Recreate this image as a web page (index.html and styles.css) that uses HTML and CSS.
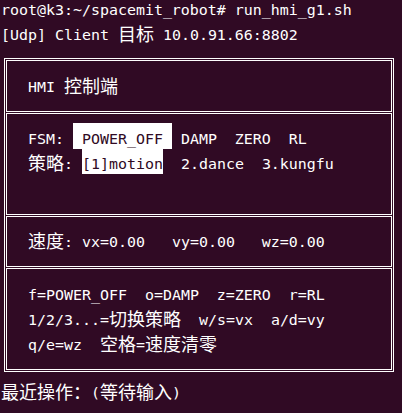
FILE: index.html
```html
<!DOCTYPE html>
<html lang="zh">
<head>
<meta charset="utf-8">
<title>run_hmi_g1.sh</title>
<link rel="stylesheet" href="styles.css">
</head>
<body>
<div class="term">
  <div class="line l1">root@k3:~/spacemit_robot# run_hmi_g1.sh</div>
  <div class="line l2">[Udp] Client <span class="c">目标</span> 10.0.91.66:8802</div>
  <div class="box">
    <section class="sec s1">
      <div class="row">HMI <span class="c">控制端</span></div>
    </section>
    <section class="sec s2">
      <div class="row">FSM: <span class="hl"> POWER_OFF </span> DAMP  ZERO  RL </div>
      <div class="row"><span class="c">策略</span>: <span class="hl">[1]motion</span>  2.dance  3.kungfu</div>
    </section>
    <section class="sec s3">
      <div class="row"><span class="c">速度</span>: vx=0.00   vy=0.00   wz=0.00</div>
    </section>
    <section class="sec s4">
      <div class="row">f=POWER_OFF  o=DAMP  z=ZERO  r=RL</div>
      <div class="row">1/2/3...=<span class="c">切换策略</span>  w/s=vx  a/d=vy</div>
      <div class="row">q/e=wz  <span class="c">空格</span>=<span class="c">速度清零</span></div>
    </section>
  </div>
  <div class="line last"><span class="c">最近操作：</span>(<span class="c">等待输入</span>)</div>
</div>
</body>
</html>
```
FILE: styles.css
```css
html, body {
  margin: 0;
  background: #300a24;
}

body {
  color: #ffffff;
  font-family: "DejaVu Sans Mono", "Liberation Mono", monospace;
  font-size: 14.95px;
  width: 402px;
  height: 413px;
  overflow: hidden;
}

.line {
  white-space: pre;
  padding-left: 1px;
}

.l1 {
  height: 20px;
  line-height: 20px;
}

.l2 {
  height: 25px;
  line-height: 25px;
  margin-top: 3px;
}

.box {
  box-sizing: border-box;
  width: 390px;
  margin: 10px 0 0 4px;
  border: 1px solid #ffffff;
  padding: 1px;
  display: flex;
  flex-direction: column;
  gap: 1px;
}

.sec {
  border: 1px solid #ffffff;
  padding-left: 21px;
}

.s1 { padding-top: 14px; padding-bottom: 11px; }
.s2 { padding-top: 13px; padding-bottom: 37px; }
.s3 { padding-top: 13px; padding-bottom: 11px; }
.s4 { padding-top: 14px; padding-bottom: 11px; }

.row {
  height: 25px;
  line-height: 25px;
  white-space: pre;
}

.last {
  margin-top: 9px;
  height: 25px;
  line-height: 25px;
}

.c {
  font-family: "Noto Sans CJK SC", sans-serif;
  font-size: 18px;
  line-height: 18px;
  vertical-align: -1px;
}

.hl {
  background: #ffffff;
  color: #300a24;
  padding: 7px 0 0.5px;
}
```
